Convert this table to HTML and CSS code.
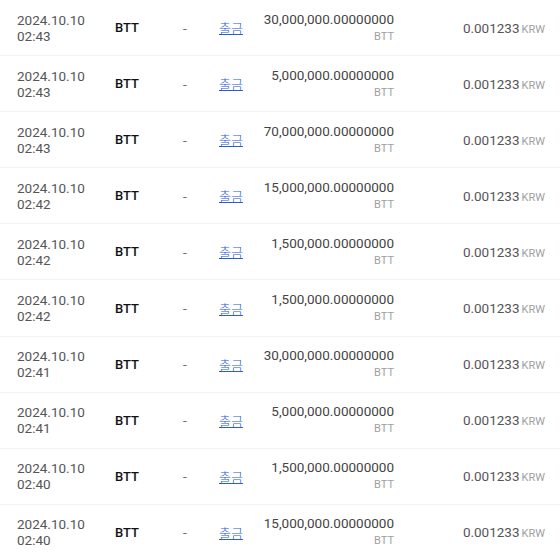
FILE: index.html
```html
<!DOCTYPE html>
<html lang="ko">
<head>
<meta charset="utf-8">
<link rel="stylesheet" href="styles.css">
</head>
<body>
<div class="list">
  <div class="row"><div class="date">2024.10.10<br>02:43</div><div class="coin">BTT</div><div class="dash">-</div><div class="type"><a href="#">출금</a></div><div class="amount"><span class="num">30,000,000.00000000</span><span class="unit">BTT</span></div><div class="price"><span class="num">0.001233</span><span class="cur">KRW</span></div></div>
  <div class="row"><div class="date">2024.10.10<br>02:43</div><div class="coin">BTT</div><div class="dash">-</div><div class="type"><a href="#">출금</a></div><div class="amount"><span class="num">5,000,000.00000000</span><span class="unit">BTT</span></div><div class="price"><span class="num">0.001233</span><span class="cur">KRW</span></div></div>
  <div class="row"><div class="date">2024.10.10<br>02:43</div><div class="coin">BTT</div><div class="dash">-</div><div class="type"><a href="#">출금</a></div><div class="amount"><span class="num">70,000,000.00000000</span><span class="unit">BTT</span></div><div class="price"><span class="num">0.001233</span><span class="cur">KRW</span></div></div>
  <div class="row"><div class="date">2024.10.10<br>02:42</div><div class="coin">BTT</div><div class="dash">-</div><div class="type"><a href="#">출금</a></div><div class="amount"><span class="num">15,000,000.00000000</span><span class="unit">BTT</span></div><div class="price"><span class="num">0.001233</span><span class="cur">KRW</span></div></div>
  <div class="row"><div class="date">2024.10.10<br>02:42</div><div class="coin">BTT</div><div class="dash">-</div><div class="type"><a href="#">출금</a></div><div class="amount"><span class="num">1,500,000.00000000</span><span class="unit">BTT</span></div><div class="price"><span class="num">0.001233</span><span class="cur">KRW</span></div></div>
  <div class="row"><div class="date">2024.10.10<br>02:42</div><div class="coin">BTT</div><div class="dash">-</div><div class="type"><a href="#">출금</a></div><div class="amount"><span class="num">1,500,000.00000000</span><span class="unit">BTT</span></div><div class="price"><span class="num">0.001233</span><span class="cur">KRW</span></div></div>
  <div class="row"><div class="date">2024.10.10<br>02:41</div><div class="coin">BTT</div><div class="dash">-</div><div class="type"><a href="#">출금</a></div><div class="amount"><span class="num">30,000,000.00000000</span><span class="unit">BTT</span></div><div class="price"><span class="num">0.001233</span><span class="cur">KRW</span></div></div>
  <div class="row"><div class="date">2024.10.10<br>02:41</div><div class="coin">BTT</div><div class="dash">-</div><div class="type"><a href="#">출금</a></div><div class="amount"><span class="num">5,000,000.00000000</span><span class="unit">BTT</span></div><div class="price"><span class="num">0.001233</span><span class="cur">KRW</span></div></div>
  <div class="row"><div class="date">2024.10.10<br>02:40</div><div class="coin">BTT</div><div class="dash">-</div><div class="type"><a href="#">출금</a></div><div class="amount"><span class="num">1,500,000.00000000</span><span class="unit">BTT</span></div><div class="price"><span class="num">0.001233</span><span class="cur">KRW</span></div></div>
  <div class="row"><div class="date">2024.10.10<br>02:40</div><div class="coin">BTT</div><div class="dash">-</div><div class="type"><a href="#">출금</a></div><div class="amount"><span class="num">15,000,000.00000000</span><span class="unit">BTT</span></div><div class="price"><span class="num">0.001233</span><span class="cur">KRW</span></div></div>
</div>
</body>
</html>
```
FILE: styles.css
```css
html, body {
  margin: 0;
  padding: 0;
  background: #fff;
}
body {
  font-family: Roboto, "Noto Sans CJK KR", sans-serif;
  font-size: 13.5px;
  color: #444;
}
.row {
  display: grid;
  grid-template-columns: 98px 58px 46px 60px 115px 151px;
  align-items: center;
  height: 55.1px;
  padding: 0 15px 0 17px;
  border-bottom: 1px solid #f2f2f2;
}
.date {
  line-height: 16px;
  color: #555;
}
.coin {
  font-weight: 500;
  font-size: 13px;
  color: #111;
}
.dash {
  padding-left: 10px;
  color: #666;
}
.type a {
  color: #2a5bd7;
  text-decoration: underline;
  font-family: "Noto Sans CJK KR", sans-serif;
  font-weight: 300;
  font-size: 13px;
}
.amount {
  display: flex;
  flex-direction: column;
  align-items: flex-end;
  line-height: 17px;
}
.amount .num {
  color: #444;
}
.amount .unit {
  font-size: 11px;
  color: #a0a0a0;
  line-height: 17px;
}
.price {
  text-align: right;
  color: #555;
}
.price .cur {
  font-size: 11px;
  color: #a0a0a0;
  margin-left: 2px;
}
```
